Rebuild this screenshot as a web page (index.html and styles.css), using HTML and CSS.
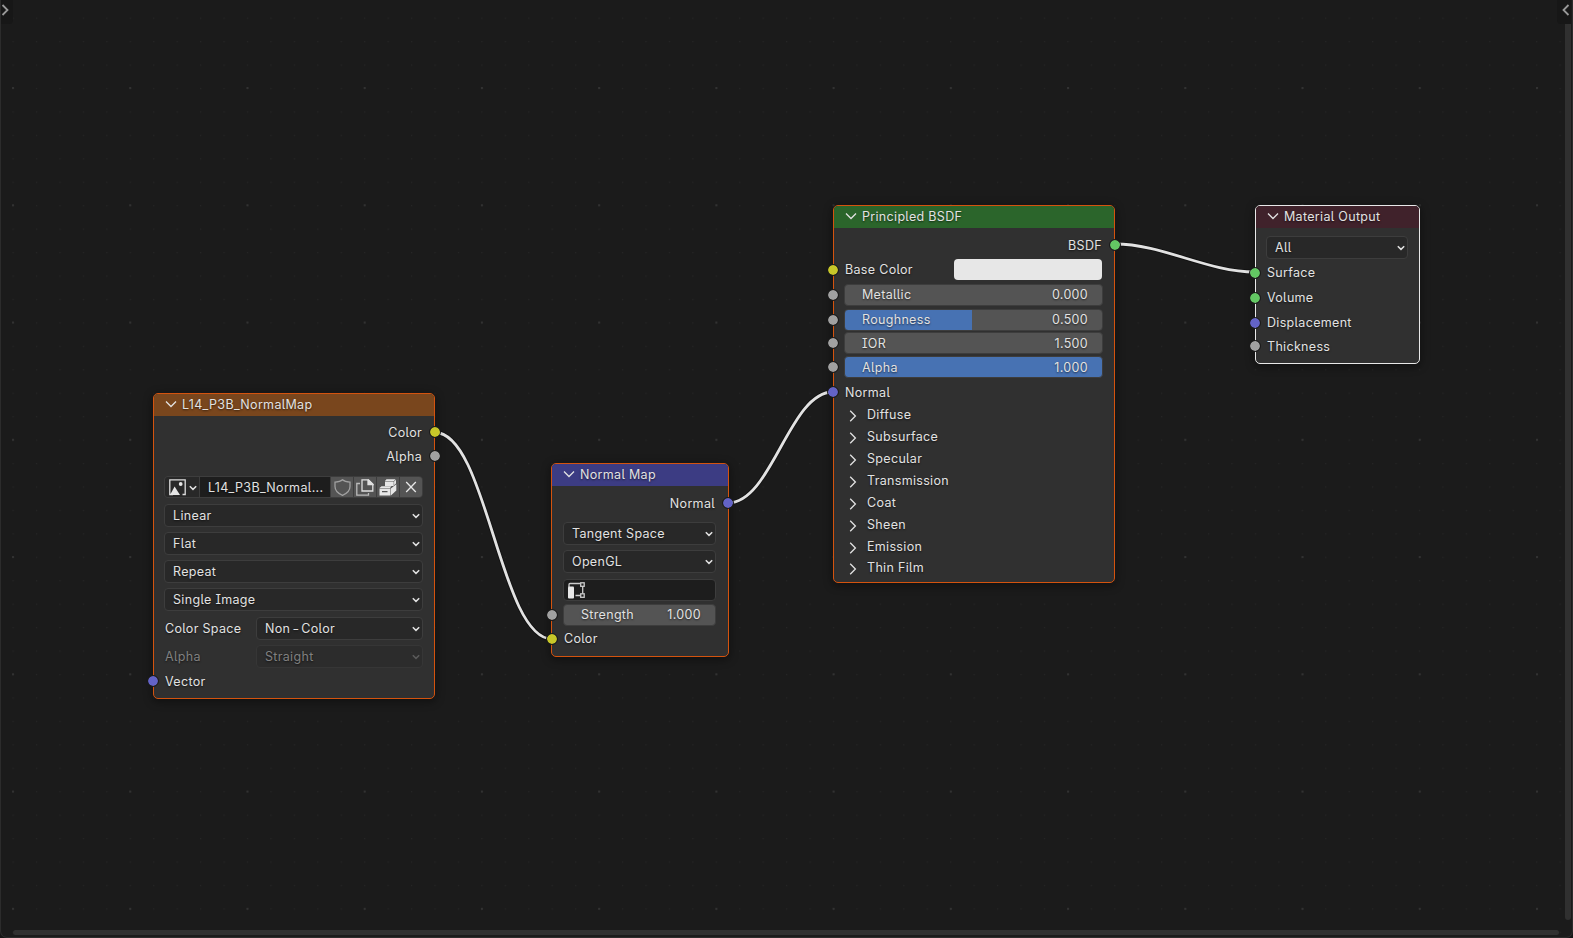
FILE: index.html
```
<!DOCTYPE html>
<html lang="en">
<head>
  <meta charset="UTF-8" />
  <title>Shader Editor</title>
  <link rel="stylesheet" href="styles.css">
</head>
<body>

<!-- Shared icons -->
<svg class="defs">
  <symbol id="down" viewBox="0 0 12 8"><path d="M1 1.5l5 5 5-5" /></symbol>
  <symbol id="right" viewBox="0 0 8 12"><path d="M1.2 .8l5.200 5.200-5.200 5.200" /></symbol>
  <symbol id="drop" viewBox="0 0 8 6"><path d="M.8 1.2l3.200 3.200 3.200-3.200" /></symbol>
</svg>

<div class="editor">

  <!-- Grid and links -->
  <svg class="canvas" width="1573" height="938">
    <defs>
      <pattern id="minor" x="12.5" y="17.6" width="23.44" height="23.44" patternUnits="userSpaceOnUse">
        <rect width="1.2" height="1.2" fill="#262626" />
      </pattern>
      <pattern id="major" x="12" y="87" width="117.23" height="117.26" patternUnits="userSpaceOnUse">
        <rect width="2" height="2" fill="#323232" />
      </pattern>
    </defs>
    <rect width="1573" height="938" fill="url(#minor)" />
    <rect width="1573" height="938" fill="url(#major)" />
    <g class="links-shadow">
      <path d="M435 432.5C487 432.5 500 639 552 639" />
      <path d="M728 503C772 503 789 392 833 392" />
      <path d="M1115 244C1163 244 1207 272 1255 272" />
    </g>
    <g class="links">
      <path d="M435 432.5C487 432.5 500 639 552 639" />
      <path d="M728 503C772 503 789 392 833 392" />
      <path d="M1115 244C1163 244 1207 272 1255 272" />
    </g>
  </svg>

  <!-- Image Texture -->
  <section class="node image-node">
    <header class="orange"><svg class="down"><use href="#down" /></svg>L14_P3B_NormalMap</header>
    <div class="body">
      <div class="row out">Color<i class="socket yellow"></i></div>
      <div class="row out">Alpha<i class="socket gray"></i></div>
      <div class="row prop id-row">
        <div class="id-block">
          <span class="browse">
            <svg width="17" height="17" viewBox="0 0 17 17">
              <path d="M4 15.5H.8V.8H16.2V15.5H13.5" fill="none" stroke="#ddd" stroke-width="1.3" />
              <path d="M1 16L5.6 7.5 11 16z" fill="#e6e6e6" />
              <circle cx="11.7" cy="5" r="1.9" fill="#e6e6e6" />
            </svg>
            <svg class="drop"><use href="#drop" /></svg>
          </span>
          <span class="id-name">L14_P3B_Normal...</span>
          <span class="btn">
            <svg width="17" height="17" viewBox="0 0 17 17" fill="none" stroke="#a0a0a0" stroke-width="1.3">
              <path d="M8.5 .8C6.5 2.6 4 3 1 3.200V7.500C1 11.500 4 14.500 8.500 16.300 13 14.500 16 11.500 16 7.500V3.200C13 3 10.500 2.600 8.500 .8z" />
            </svg>
          </span>
          <span class="btn">
            <svg width="18" height="17" viewBox="0 0 18 17" fill="none" stroke="#e0e0e0" stroke-width="1.3">
              <path d="M6 .8H12.500L16.800 5V12H6z" />
              <path d="M12 .8V5.500H16.800L12 .8" fill="#e0e0e0" />
              <path d="M4 4.500H.8V16.200H12.500V14" stroke="#bbb" />
            </svg>
          </span>
          <span class="btn">
            <svg width="18" height="17" viewBox="0 0 18 17" fill="#e6e6e6">
              <path d="M6 2L7.500 .3H16.500L15 2zM6 2.600H14.700V7H6z" />
              <path d="M15.100 2.500L17 .8V4.500L15.100 6.200z" />
              <path d="M.5 9L2.500 7.300H12.500L11 9zM.5 9.600H11.400V12H.5zM.5 12H3V13.200H8.500V12H11.400V16.500H.5zM11.900 9.500L17.300 5.200V11.500L11.900 16.500z" />
            </svg>
          </span>
          <span class="btn">
            <svg width="12" height="12" viewBox="0 0 12 12" stroke="#e6e6e6" stroke-width="1.3"><path d="M1.200 1l9.600 10M10.800 1L1.200 11" /></svg>
          </span>
        </div>
      </div>
      <div class="row prop"><div class="select">Linear<svg class="drop"><use href="#drop" /></svg></div></div>
      <div class="row prop"><div class="select">Flat<svg class="drop"><use href="#drop" /></svg></div></div>
      <div class="row prop"><div class="select">Repeat<svg class="drop"><use href="#drop" /></svg></div></div>
      <div class="row prop"><div class="select">Single Image<svg class="drop"><use href="#drop" /></svg></div></div>
      <div class="row prop split space"><label>Color Space</label><div class="select">Non<span class="hyphen">-</span>Color<svg class="drop"><use href="#drop" /></svg></div></div>
      <div class="row prop split disabled"><label>Alpha</label><div class="select">Straight<svg class="drop"><use href="#drop" /></svg></div></div>
      <div class="row vector">Vector<i class="socket blue"></i></div>
    </div>
  </section>

  <!-- Normal Map -->
  <section class="node normal-node">
    <header class="indigo"><svg class="down"><use href="#down" /></svg>Normal Map</header>
    <div class="body">
      <div class="row out">Normal<i class="socket blue"></i></div>
      <div class="row prop first"><div class="select">Tangent Space<svg class="drop"><use href="#drop" /></svg></div></div>
      <div class="row prop"><div class="select">OpenGL<svg class="drop"><use href="#drop" /></svg></div></div>
      <div class="row prop">
        <div class="field">
          <svg width="17" height="17" viewBox="0 0 17 17" fill="none" stroke="#ccc" stroke-width="1.3">
            <path d="M1 5V2.500Q1 1.500 2 1.500H12M14.700 4V11.500M7.500 13.500H12" />
            <rect x="12.700" y=".8" width="3.500" height="3.500" />
            <rect x="12.700" y="11.800" width="3.500" height="3.500" />
            <rect x="0" y="4.500" width="6" height="12" rx="1" fill="#e6e6e6" stroke="none" />
          </svg>
        </div>
      </div>
      <div class="row strength"><div class="slider"><span>Strength</span><span>1.000</span></div><i class="socket gray"></i></div>
      <div class="row num">Color<i class="socket yellow"></i></div>
    </div>
  </section>

  <!-- Principled BSDF -->
  <section class="node bsdf-node">
    <header class="green"><svg class="down"><use href="#down" /></svg>Principled BSDF</header>
    <div class="body">
      <div class="row out">BSDF<i class="socket lime"></i></div>
      <div class="row num color">Base Color<div class="swatch"></div><i class="socket yellow"></i></div>
      <div class="row num"><div class="slider"><span>Metallic</span><span>0.000</span></div><i class="socket gray"></i></div>
      <div class="row num"><div class="slider half"><span>Roughness</span><span>0.500</span></div><i class="socket gray"></i></div>
      <div class="row tight"><div class="slider"><span>IOR</span><span>1.500</span></div><i class="socket gray"></i></div>
      <div class="row"><div class="slider full"><span>Alpha</span><span>1.000</span></div><i class="socket gray"></i></div>
      <div class="row loose">Normal<i class="socket blue"></i></div>
      <div class="panels">
        <div class="panel"><svg class="right"><use href="#right" /></svg>Diffuse</div>
        <div class="panel"><svg class="right"><use href="#right" /></svg>Subsurface</div>
        <div class="panel"><svg class="right"><use href="#right" /></svg>Specular</div>
        <div class="panel"><svg class="right"><use href="#right" /></svg>Transmission</div>
        <div class="panel"><svg class="right"><use href="#right" /></svg>Coat</div>
        <div class="panel"><svg class="right"><use href="#right" /></svg>Sheen</div>
        <div class="panel"><svg class="right"><use href="#right" /></svg>Emission</div>
        <div class="panel last"><svg class="right"><use href="#right" /></svg>Thin Film</div>
      </div>
    </div>
  </section>

  <!-- Material Output -->
  <section class="node output-node">
    <header class="maroon"><svg class="down"><use href="#down" /></svg>Material Output</header>
    <div class="body">
      <div class="row target"><div class="select">All<svg class="drop"><use href="#drop" /></svg></div></div>
      <div class="row num">Surface<i class="socket lime"></i></div>
      <div class="row num">Volume<i class="socket lime"></i></div>
      <div class="row num">Displacement<i class="socket blue"></i></div>
      <div class="row tight">Thickness<i class="socket gray"></i></div>
    </div>
  </section>

  <!-- Region toggles and scrollbars -->
  <div class="scroll-y"></div>
  <div class="scroll-x"></div>
  <div class="toggle left"><svg width="8" height="12" viewBox="0 0 8 12"><path d="M1.500 1l5 5-5 5" /></svg></div>
  <div class="toggle end"><svg width="8" height="12" viewBox="0 0 8 12"><path d="M6.500 1l-5 5 5 5" /></svg></div>
</div>

</body>
</html>
```
FILE: styles.css
```
* {
  box-sizing: border-box;
}
body {
  margin: 0;
  background: #161616;
  color: #e2e2e2;
  font-family: Inter, sans-serif;
  font-size: 12.5px;
  letter-spacing: 0.32px;
  font-feature-settings: "cv05", "cv08";
  text-shadow: 0 1px 2px rgba(0, 0, 0, 0.6);
}
.defs {
  display: none;
}
.editor {
  position: relative;
  width: 1573px;
  height: 938px;
  overflow: hidden;
  background: #1b1b1b;
  border-left: 1px solid #2c2c2c;
  border-bottom: 1px solid #2c2c2c;
  border-right: 1px solid #2c2c2c;
  border-radius: 0 0 7px 7px;
}
.canvas {
  position: absolute;
  left: -1px;
  top: 0;
}
.links, .links-shadow {
  fill: none;
  stroke: #e2e2e2;
  stroke-width: 2.8;
}
.links-shadow {
  stroke: #111;
  stroke-width: 4.5;
}

/* Nodes */
.node {
  position: absolute;
  background: #303030;
  border: 1px solid #d4530e;
  border-radius: 5px;
  box-shadow: 0 2px 8px 1px rgba(0, 0, 0, 0.4);
}
.image-node {
  left: 152px;
  top: 393px;
  width: 282px;
  height: 306px;
}
.normal-node {
  left: 550px;
  top: 463px;
  width: 178px;
  height: 194px;
}
.bsdf-node {
  left: 832px;
  top: 205px;
  width: 282px;
  height: 378px;
}
.output-node {
  left: 1254px;
  top: 205px;
  width: 165px;
  height: 159px;
  border-color: #e8e8e8;
}
header {
  display: flex;
  align-items: center;
  gap: 5px;
  height: 22px;
  padding: 0 0 1px 11px;
  border-radius: 4px 4px 0 0;
}
.orange { background: #79461d; }
.indigo { background: #3c3c83; }
.green { background: #2b652b; }
.maroon { background: #40222b; }
svg {
  flex: none;
}
.down, .right, .drop {
  fill: none;
  stroke: #e2e2e2;
  stroke-width: 1.3;
}
.down {
  width: 12px;
  height: 8px;
  margin-top: -1px;
}
.right {
  width: 8px;
  height: 12px;
  margin-top: 3px;
}
.drop {
  width: 8px;
  height: 6px;
  margin-left: auto;
  margin-top: 2px;
  stroke-width: 1.5;
}
.body {
  padding: 5px 11px 0 10px;
}

/* Rows */
.row {
  position: relative;
  display: flex;
  align-items: center;
  height: 24px;
  text-indent: 1px;
}
.row.out {
  justify-content: flex-end;
  padding-right: 1px;
}
.row.prop {
  height: 28px;
}
.row.num {
  height: 25px;
}
.row.tight {
  margin-top: -1px;
}
.row.loose {
  margin-top: 1px;
}
.id-row {
  margin-top: 5px;
}
.row.first {
  margin-top: 4px;
}
.row.space {
  margin-top: 1px;
}
.row.vector {
  height: 22px;
}
.row.strength {
  height: 23px;
}
.row.target {
  height: 26px;
}
.select {
  display: flex;
  align-items: center;
  flex: 1;
  height: 23px;
  padding: 0 2px 0 8px;
  background: #282828;
  border: 1px solid #3d3d3d;
  border-radius: 4px;
  text-indent: 0;
}
.split label {
  width: 92px;
}
.hyphen {
  display: inline-block;
  margin: 0 2.5px;
  transform: scaleX(1.15);
}
.disabled {
  color: #808080;
}
.disabled .select {
  background: #2c2c2c;
  border-color: #363636;
}
.disabled .drop {
  stroke: #5a5a5a;
}
.field {
  flex: 1;
  display: flex;
  align-items: center;
  height: 22px;
  margin-top: 2px;
  padding-left: 4px;
  background: #1d1d1d;
  border: 1px solid #3d3d3d;
  border-radius: 4px;
}

/* Datablock selector */
.id-block {
  display: flex;
  flex: 1;
  gap: 1px;
  height: 22px;
  background: #3d3d3d;
  border: 1px solid #3d3d3d;
  border-radius: 4px;
  overflow: hidden;
  text-indent: 0;
}
.browse {
  display: flex;
  align-items: center;
  width: 34px;
  padding: 0 2px 0 4px;
  background: #282828;
}
.id-name {
  flex: 1;
  line-height: 21px;
  padding-left: 8px;
  background: #1d1d1d;
  white-space: nowrap;
}
.btn {
  display: flex;
  align-items: center;
  justify-content: center;
  width: 22px;
  background: #545454;
}

/* Number fields */
.slider {
  display: flex;
  flex: 1;
  justify-content: space-between;
  align-items: center;
  height: 22px;
  padding: 0 14px 0 17px;
  background: #545454;
  border: 1px solid #3d3d3d;
  border-radius: 4px;
  text-indent: 0;
}
.slider.half {
  background: linear-gradient(90deg, #4772b3 127px, #545454 127px);
}
.slider.full {
  background: #4772b3;
}
.color {
  justify-content: space-between;
}
.swatch {
  width: 148px;
  height: 21px;
  margin-right: 1px;
  background: #e7e7e7;
  border-radius: 4px;
}
.panels {
  margin-top: -1px;
}
.panel {
  display: flex;
  align-items: center;
  gap: 10px;
  height: 22px;
  padding-left: 5px;
}
.panel.last {
  height: 20px;
}

/* Sockets */
.socket {
  position: absolute;
  left: -17px;
  top: 50%;
  width: 12px;
  height: 12px;
  margin-top: -6px;
  border-radius: 50%;
  border: 1px solid #1a1a1a;
  background-clip: padding-box;
}
.out .socket {
  left: auto;
  right: -18px;
}
.yellow { background-color: #c7c729; }
.gray { background-color: #a1a1a1; }
.blue { background-color: #6363c7; }
.lime { background-color: #63c763; }

/* Per node offsets */
.image-node .body {
  padding-top: 4px;
}
.normal-node .body {
  padding: 5px 12px 0 11px;
}
.output-node .body {
  padding-top: 6px;
}

/* Editor edges */
.scroll-y {
  position: absolute;
  right: 1px;
  top: -5px;
  width: 6px;
  height: 925px;
  background: #303030;
  border-radius: 3px;
}
.scroll-x {
  position: absolute;
  left: 12px;
  top: 930px;
  width: 1546px;
  height: 5px;
  background: #303030;
  border-radius: 3px;
}
.toggle {
  position: absolute;
  top: 0;
  width: 12px;
  height: 24px;
  padding: 4px 0 0 0;
  background: #171717;
}
.toggle svg {
  display: block;
  fill: none;
  stroke: #999;
  stroke-width: 1.8;
}
.toggle.left {
  left: 0;
  border-radius: 0 0 4px 0;
}
.toggle.end {
  right: 1px;
  width: 14px;
  padding-left: 5px;
  border-radius: 0 0 0 4px;
}
```
